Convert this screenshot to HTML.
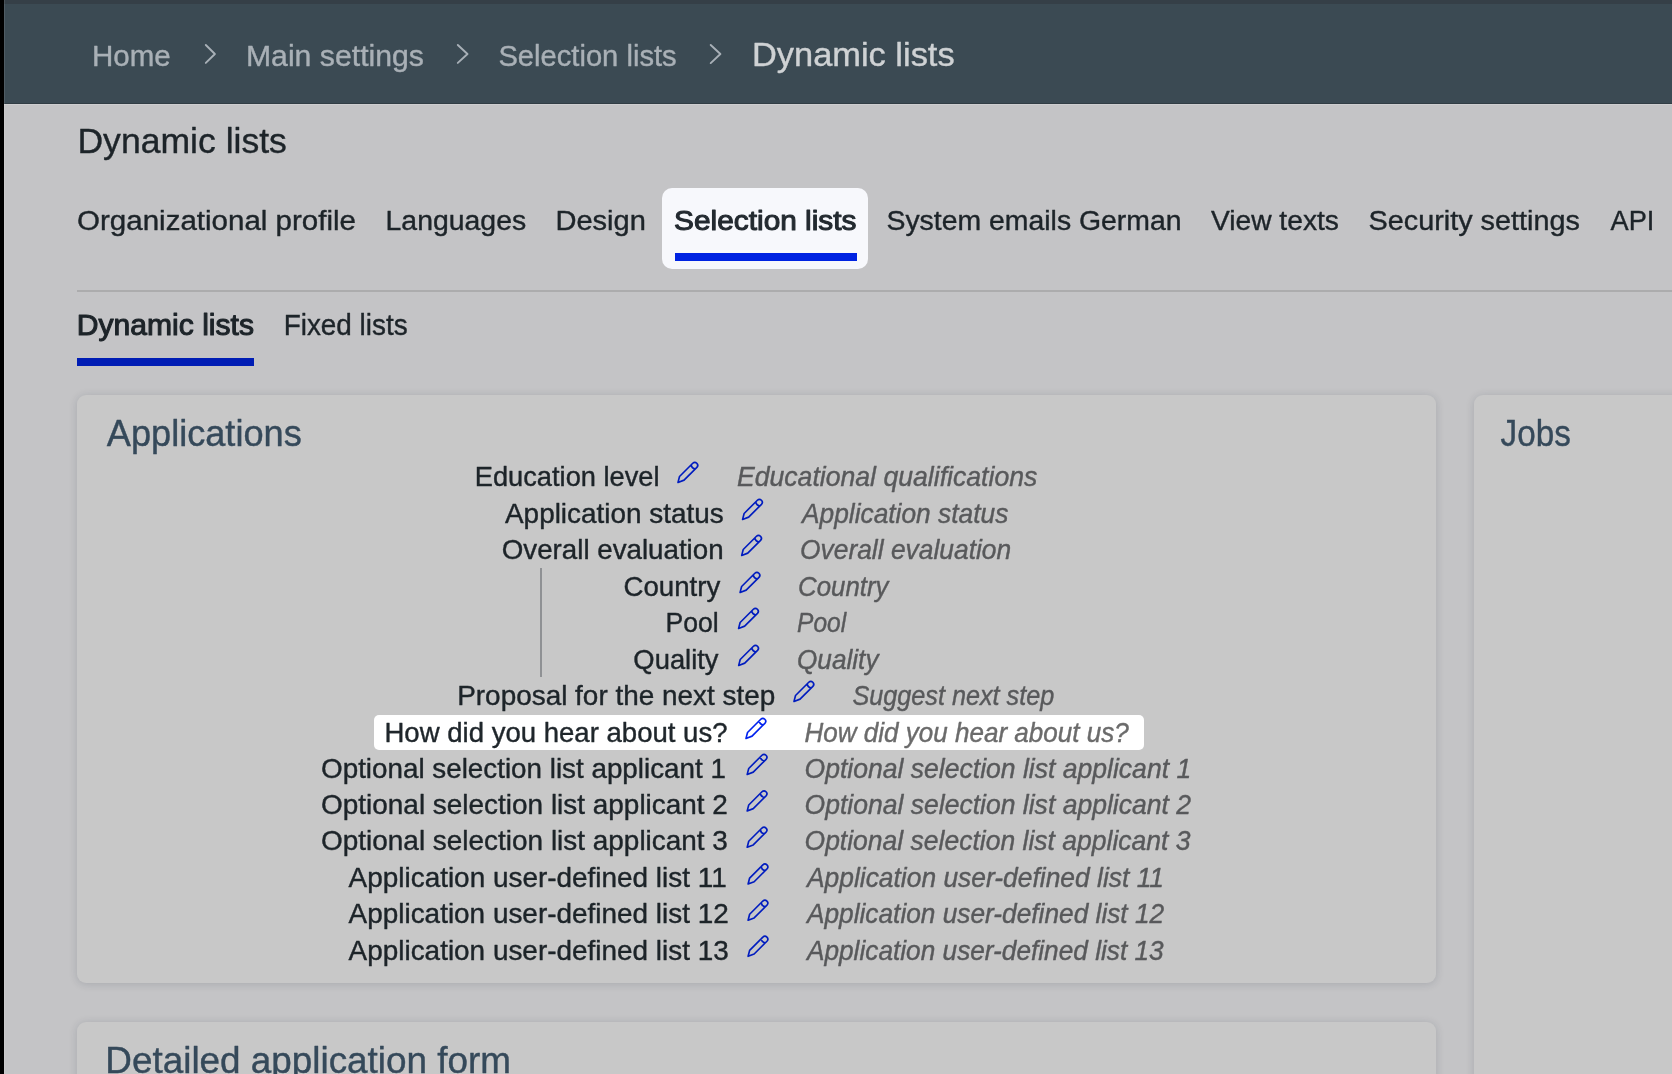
<!DOCTYPE html>
<html><head><meta charset="utf-8">
<style>
html,body{margin:0;padding:0;width:1672px;height:1074px;overflow:hidden;background:#c4c4c6;font-family:"Liberation Sans",sans-serif;}
.abs{position:absolute;}
#lstrip{left:0;top:0;width:4px;height:1074px;background:#000;z-index:5}
#header{left:0;top:0;width:1672px;height:104px;background:#3b4a53;}
#hstrip{left:0;top:0;width:1672px;height:3.5px;background:#353f47;}
#hbot{left:0;top:103px;width:1672px;height:1px;background:#313d44;}
#divider{left:77px;top:290px;width:1595px;height:1.5px;background:#acacad;}
#tabhl{left:662px;top:188px;width:205.5px;height:81px;border-radius:10px;background:#f7f8fc;}
#tabul{left:675px;top:253px;width:182px;height:8px;background:#0023e2;}
#subul{left:77px;top:358px;width:177px;height:8px;background:#001db4;}
.card{background:#c8c8c8;border-radius:9px;box-shadow:0 1px 8px rgba(20,30,50,0.16);}
#card1{left:77px;top:395px;width:1359px;height:588px;}
#card2{left:1474px;top:395px;width:260px;height:800px;}
#card3{left:77px;top:1022px;width:1359px;height:300px;}
#vline{left:540px;top:568px;width:2px;height:109px;background:#8f9194;}
#rowhl{left:373.5px;top:715px;width:770px;height:34.5px;border-radius:5px;background:#ffffff;}
svg#txt{will-change:transform;position:absolute;left:0;top:0;width:1672px;height:1074px;font-family:"Liberation Sans";}
</style></head><body>
<div class="abs" id="header"></div>
<div class="abs" id="hstrip"></div>
<div class="abs" id="hbot"></div>
<div class="abs" id="lstrip"></div>
<div class="abs" style="left:4px;top:0;width:1px;height:1074px;background:rgba(255,255,255,0.10);z-index:5"></div>
<div class="abs" style="left:0;top:104px;width:1672px;height:1px;background:rgba(255,255,255,0.18)"></div>
<div class="abs" id="divider"></div>
<div class="abs" id="tabhl"></div>
<div class="abs" id="tabul"></div>
<div class="abs" id="subul"></div>
<div class="abs card" id="card1"></div>
<div class="abs card" id="card2"></div>
<div class="abs card" id="card3"></div>
<div class="abs" id="vline"></div>
<div class="abs" id="rowhl"></div>
<svg id="txt" width="1672" height="1074" viewBox="0 0 1672 1074">
<defs>
<symbol id="pen" viewBox="0 0 22 22" width="22" height="22" overflow="visible">
<path d="M0.8 21 L2.33 15.06 L15.56 1.84 A2.9 2.9 0 0 1 19.66 5.94 L6.86 18.73 Z M13.86 3.54 Q14.5 7.0 17.96 7.64" fill="none" stroke-width="1.65" stroke-linejoin="round" stroke-linecap="round"/>
</symbol>
</defs>
<text x="91.94" y="65.85" font-size="30.16" fill="#a9b0b6" stroke="#a9b0b6" stroke-width="0.4" stroke-linejoin="round" textLength="78.82" lengthAdjust="spacingAndGlyphs">Home</text>
<text x="245.90" y="65.85" font-size="30.16" fill="#a9b0b6" stroke="#a9b0b6" stroke-width="0.4" stroke-linejoin="round" textLength="178.09" lengthAdjust="spacingAndGlyphs">Main settings</text>
<text x="498.43" y="65.85" font-size="30.16" fill="#a9b0b6" stroke="#a9b0b6" stroke-width="0.4" stroke-linejoin="round" textLength="178.21" lengthAdjust="spacingAndGlyphs">Selection lists</text>
<text x="751.98" y="65.65" font-size="34.08" fill="#cfd2d4" stroke="#cfd2d4" stroke-width="0.4" stroke-linejoin="round" textLength="202.67" lengthAdjust="spacingAndGlyphs">Dynamic lists</text>
<text x="77.41" y="152.55" font-size="35.83" fill="#1d2429" stroke="#1d2429" stroke-width="0.4" stroke-linejoin="round" textLength="209.49" lengthAdjust="spacingAndGlyphs">Dynamic lists</text>
<text x="77.05" y="229.65" font-size="28.13" fill="#1d2429" stroke="#1d2429" stroke-width="0.4" stroke-linejoin="round" textLength="278.91" lengthAdjust="spacingAndGlyphs">Organizational profile</text>
<text x="385.58" y="229.65" font-size="28.13" fill="#1d2429" stroke="#1d2429" stroke-width="0.4" stroke-linejoin="round" textLength="140.58" lengthAdjust="spacingAndGlyphs">Languages</text>
<text x="555.43" y="229.65" font-size="28.13" fill="#1d2429" stroke="#1d2429" stroke-width="0.4" stroke-linejoin="round" textLength="90.46" lengthAdjust="spacingAndGlyphs">Design</text>
<text x="886.49" y="229.65" font-size="28.13" fill="#1d2429" stroke="#1d2429" stroke-width="0.4" stroke-linejoin="round" textLength="295.06" lengthAdjust="spacingAndGlyphs">System emails German</text>
<text x="1210.90" y="229.65" font-size="28.13" fill="#1d2429" stroke="#1d2429" stroke-width="0.4" stroke-linejoin="round" textLength="128.05" lengthAdjust="spacingAndGlyphs">View texts</text>
<text x="1368.47" y="229.65" font-size="28.13" fill="#1d2429" stroke="#1d2429" stroke-width="0.4" stroke-linejoin="round" textLength="211.48" lengthAdjust="spacingAndGlyphs">Security settings</text>
<text x="1610.50" y="229.65" font-size="28.13" fill="#1d2429" stroke="#1d2429" stroke-width="0.4" stroke-linejoin="round" textLength="43.85" lengthAdjust="spacingAndGlyphs">API</text>
<text x="674.14" y="229.65" font-size="28.13" fill="#232a30" stroke="#232a30" stroke-width="1.05" stroke-linejoin="round" textLength="182.32" lengthAdjust="spacingAndGlyphs">Selection lists</text>
<text x="76.80" y="334.65" font-size="28.71" fill="#1d2429" stroke="#1d2429" stroke-width="1.05" stroke-linejoin="round" textLength="177.16" lengthAdjust="spacingAndGlyphs">Dynamic lists</text>
<text x="283.66" y="334.65" font-size="28.71" fill="#1d2429" stroke="#1d2429" stroke-width="0.4" stroke-linejoin="round" textLength="123.98" lengthAdjust="spacingAndGlyphs">Fixed lists</text>
<text x="106.80" y="445.65" font-size="36.56" fill="#35495a" stroke="#35495a" stroke-width="0.4" stroke-linejoin="round" textLength="194.96" lengthAdjust="spacingAndGlyphs">Applications</text>
<text x="1500.60" y="445.65" font-size="36.56" fill="#35495a" stroke="#35495a" stroke-width="0.4" stroke-linejoin="round" textLength="70.16" lengthAdjust="spacingAndGlyphs">Jobs</text>
<text x="105.38" y="1072.95" font-size="36.56" fill="#35495a" stroke="#35495a" stroke-width="0.4" stroke-linejoin="round" textLength="405.58" lengthAdjust="spacingAndGlyphs">Detailed application form</text>
<text x="474.78" y="485.65" font-size="26.96" fill="#1d2429" stroke="#1d2429" stroke-width="0.4" stroke-linejoin="round" textLength="184.82" lengthAdjust="spacingAndGlyphs">Education level</text>
<text x="736.90" y="485.65" font-size="26.96" font-style="italic" fill="#58595b" stroke="#58595b" stroke-width="0.4" stroke-linejoin="round" textLength="300.47" lengthAdjust="spacingAndGlyphs">Educational qualifications</text>
<text x="505.00" y="522.65" font-size="26.96" fill="#1d2429" stroke="#1d2429" stroke-width="0.4" stroke-linejoin="round" textLength="218.69" lengthAdjust="spacingAndGlyphs">Application status</text>
<text x="801.95" y="522.65" font-size="26.96" font-style="italic" fill="#58595b" stroke="#58595b" stroke-width="0.4" stroke-linejoin="round" textLength="206.41" lengthAdjust="spacingAndGlyphs">Application status</text>
<text x="501.77" y="558.65" font-size="26.96" fill="#1d2429" stroke="#1d2429" stroke-width="0.4" stroke-linejoin="round" textLength="221.85" lengthAdjust="spacingAndGlyphs">Overall evaluation</text>
<text x="800.02" y="558.65" font-size="26.96" font-style="italic" fill="#58595b" stroke="#58595b" stroke-width="0.4" stroke-linejoin="round" textLength="211.15" lengthAdjust="spacingAndGlyphs">Overall evaluation</text>
<text x="623.47" y="595.65" font-size="26.96" fill="#1d2429" stroke="#1d2429" stroke-width="0.4" stroke-linejoin="round" textLength="96.79" lengthAdjust="spacingAndGlyphs">Country</text>
<text x="798.04" y="595.65" font-size="26.96" font-style="italic" fill="#58595b" stroke="#58595b" stroke-width="0.4" stroke-linejoin="round" textLength="90.40" lengthAdjust="spacingAndGlyphs">Country</text>
<text x="665.53" y="631.65" font-size="26.96" fill="#1d2429" stroke="#1d2429" stroke-width="0.4" stroke-linejoin="round" textLength="53.14" lengthAdjust="spacingAndGlyphs">Pool</text>
<text x="797.10" y="631.65" font-size="26.96" font-style="italic" fill="#58595b" stroke="#58595b" stroke-width="0.4" stroke-linejoin="round" textLength="49.08" lengthAdjust="spacingAndGlyphs">Pool</text>
<text x="633.38" y="668.65" font-size="26.96" fill="#1d2429" stroke="#1d2429" stroke-width="0.4" stroke-linejoin="round" textLength="85.18" lengthAdjust="spacingAndGlyphs">Quality</text>
<text x="796.93" y="668.65" font-size="26.96" font-style="italic" fill="#58595b" stroke="#58595b" stroke-width="0.4" stroke-linejoin="round" textLength="81.59" lengthAdjust="spacingAndGlyphs">Quality</text>
<text x="457.23" y="704.65" font-size="26.96" fill="#1d2429" stroke="#1d2429" stroke-width="0.4" stroke-linejoin="round" textLength="318.00" lengthAdjust="spacingAndGlyphs">Proposal for the next step</text>
<text x="852.40" y="704.65" font-size="26.96" font-style="italic" fill="#58595b" stroke="#58595b" stroke-width="0.4" stroke-linejoin="round" textLength="201.79" lengthAdjust="spacingAndGlyphs">Suggest next step</text>
<text x="384.46" y="741.65" font-size="26.96" fill="#1f262b" stroke="#1f262b" stroke-width="0.4" stroke-linejoin="round" textLength="343.06" lengthAdjust="spacingAndGlyphs">How did you hear about us?</text>
<text x="804.50" y="741.65" font-size="26.96" font-style="italic" fill="#6b6b6b" stroke="#6b6b6b" stroke-width="0.4" stroke-linejoin="round" textLength="324.19" lengthAdjust="spacingAndGlyphs">How did you hear about us?</text>
<text x="321.07" y="777.65" font-size="26.96" fill="#1d2429" stroke="#1d2429" stroke-width="0.4" stroke-linejoin="round" textLength="404.85" lengthAdjust="spacingAndGlyphs">Optional selection list applicant 1</text>
<text x="804.52" y="777.65" font-size="26.96" font-style="italic" fill="#58595b" stroke="#58595b" stroke-width="0.4" stroke-linejoin="round" textLength="386.65" lengthAdjust="spacingAndGlyphs">Optional selection list applicant 1</text>
<text x="321.06" y="814.15" font-size="26.96" fill="#1d2429" stroke="#1d2429" stroke-width="0.4" stroke-linejoin="round" textLength="406.86" lengthAdjust="spacingAndGlyphs">Optional selection list applicant 2</text>
<text x="804.52" y="814.15" font-size="26.96" font-style="italic" fill="#58595b" stroke="#58595b" stroke-width="0.4" stroke-linejoin="round" textLength="386.47" lengthAdjust="spacingAndGlyphs">Optional selection list applicant 2</text>
<text x="321.06" y="850.45" font-size="26.96" fill="#1d2429" stroke="#1d2429" stroke-width="0.4" stroke-linejoin="round" textLength="406.86" lengthAdjust="spacingAndGlyphs">Optional selection list applicant 3</text>
<text x="804.52" y="850.45" font-size="26.96" font-style="italic" fill="#58595b" stroke="#58595b" stroke-width="0.4" stroke-linejoin="round" textLength="385.97" lengthAdjust="spacingAndGlyphs">Optional selection list applicant 3</text>
<text x="348.60" y="887.25" font-size="26.96" fill="#1d2429" stroke="#1d2429" stroke-width="0.4" stroke-linejoin="round" textLength="378.13" lengthAdjust="spacingAndGlyphs">Application user-defined list 11</text>
<text x="806.96" y="887.25" font-size="26.96" font-style="italic" fill="#58595b" stroke="#58595b" stroke-width="0.4" stroke-linejoin="round" textLength="357.09" lengthAdjust="spacingAndGlyphs">Application user-defined list 11</text>
<text x="348.60" y="923.45" font-size="26.96" fill="#1d2429" stroke="#1d2429" stroke-width="0.4" stroke-linejoin="round" textLength="380.13" lengthAdjust="spacingAndGlyphs">Application user-defined list 12</text>
<text x="806.95" y="923.45" font-size="26.96" font-style="italic" fill="#58595b" stroke="#58595b" stroke-width="0.4" stroke-linejoin="round" textLength="357.24" lengthAdjust="spacingAndGlyphs">Application user-defined list 12</text>
<text x="348.60" y="959.55" font-size="26.96" fill="#1d2429" stroke="#1d2429" stroke-width="0.4" stroke-linejoin="round" textLength="380.13" lengthAdjust="spacingAndGlyphs">Application user-defined list 13</text>
<text x="806.95" y="959.55" font-size="26.96" font-style="italic" fill="#58595b" stroke="#58595b" stroke-width="0.4" stroke-linejoin="round" textLength="356.74" lengthAdjust="spacingAndGlyphs">Application user-defined list 13</text>
<use href="#pen" x="677.20" y="461.40" stroke="#001cbf"/>
<use href="#pen" x="741.80" y="498.40" stroke="#001cbf"/>
<use href="#pen" x="740.90" y="534.40" stroke="#001cbf"/>
<use href="#pen" x="739.30" y="571.40" stroke="#001cbf"/>
<use href="#pen" x="737.80" y="607.40" stroke="#001cbf"/>
<use href="#pen" x="737.90" y="644.40" stroke="#001cbf"/>
<use href="#pen" x="793.20" y="680.40" stroke="#001cbf"/>
<use href="#pen" x="745.20" y="717.40" stroke="#0022ee"/>
<use href="#pen" x="746.40" y="753.40" stroke="#001cbf"/>
<use href="#pen" x="746.40" y="789.90" stroke="#001cbf"/>
<use href="#pen" x="746.40" y="826.20" stroke="#001cbf"/>
<use href="#pen" x="747.30" y="863.00" stroke="#001cbf"/>
<use href="#pen" x="747.30" y="899.20" stroke="#001cbf"/>
<use href="#pen" x="747.30" y="935.30" stroke="#001cbf"/>
<polyline points="205.8,45.0 214.9,54.0 205.8,62.9" fill="none" stroke="#a8b0b7" stroke-width="1.9" stroke-linecap="round" stroke-linejoin="round"/>
<polyline points="457.8,45.0 467.5,54.0 457.8,62.9" fill="none" stroke="#a8b0b7" stroke-width="1.9" stroke-linecap="round" stroke-linejoin="round"/>
<polyline points="710.7,45.0 720.4,54.0 710.7,63.1" fill="none" stroke="#a8b0b7" stroke-width="1.9" stroke-linecap="round" stroke-linejoin="round"/>
</svg>
</body></html>
